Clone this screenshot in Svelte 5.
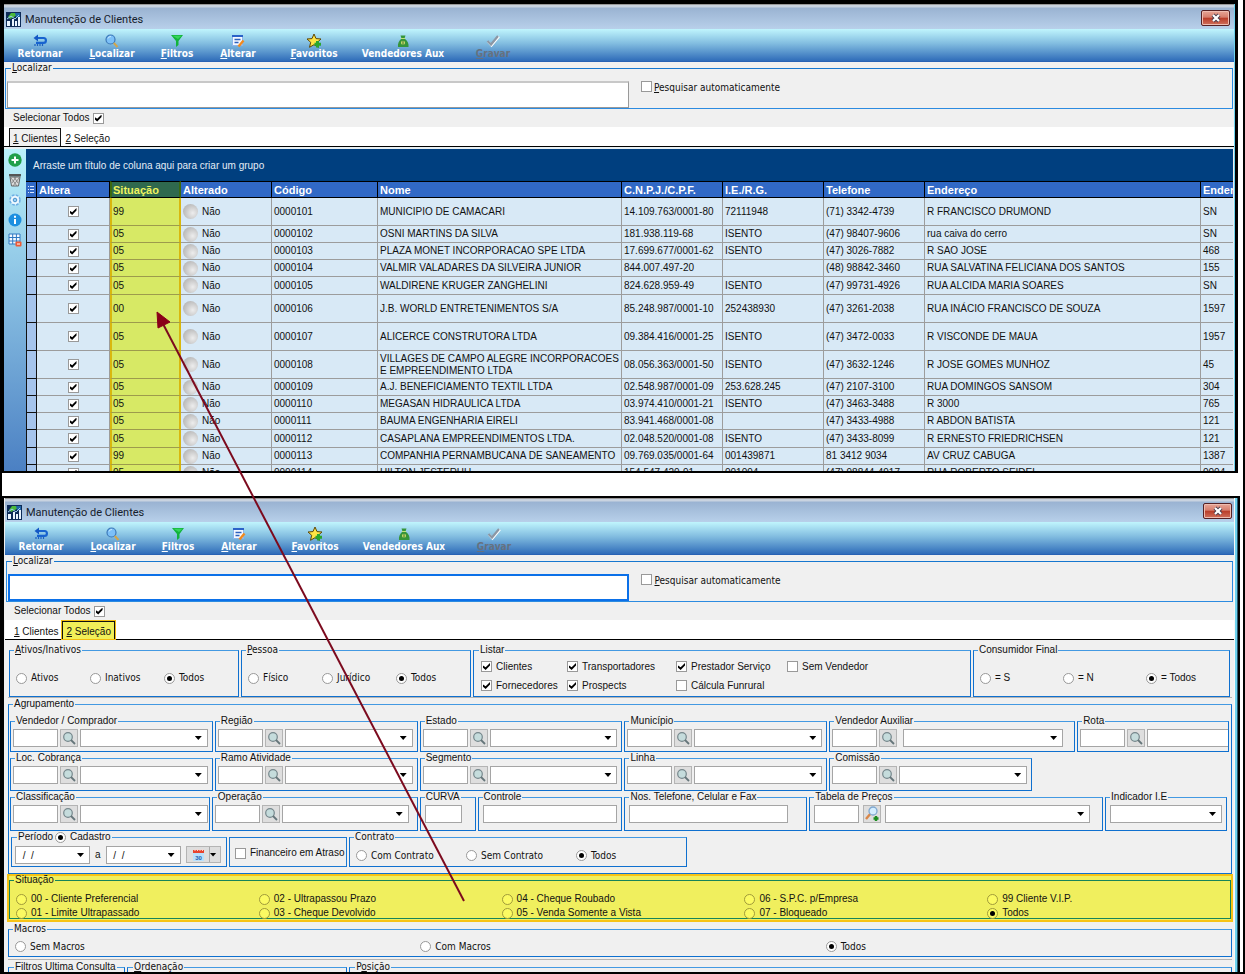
<script>
  const tools = [
    { icon: 'back', text: 'Retornar' },
    { icon: 'search', key: 'L', text: 'ocalizar' },
    { icon: 'filter', key: 'F', text: 'iltros' },
    { icon: 'edit', key: 'A', text: 'lterar' },
    { icon: 'star', key: 'F', text: 'avoritos' },
    { icon: 'bag', text: 'Vendedores Aux' },
    { icon: 'check', key: 'G', text: 'ravar', off: true }
  ];

  const heads = ['Altera', 'Situação', 'Alterado', 'Código', 'Nome', 'C.N.P.J./C.P.F.', 'I.E./R.G.', 'Telefone', 'Endereço', 'Ender'];

  const emptyDate = '\u00a0/\u00a0\u00a0/';

  // size, situação, código, nome, documento, inscrição, telefone, endereço, número
  const rows = [
    ['tall', '99', '0000101', 'MUNICIPIO DE CAMACARI', '14.109.763/0001-80', '72111948', '(71) 3342-4739', 'R FRANCISCO DRUMOND', 'SN'],
    ['low', '05', '0000102', 'OSNI MARTINS DA SILVA', '181.938.119-68', 'ISENTO', '(47) 98407-9606', 'rua caiva do cerro', 'SN'],
    ['low', '05', '0000103', 'PLAZA MONET INCORPORACAO SPE LTDA', '17.699.677/0001-62', 'ISENTO', '(47) 3026-7882', 'R SAO JOSE', '468'],
    ['low', '05', '0000104', 'VALMIR VALADARES DA SILVEIRA JUNIOR', '844.007.497-20', '', '(48) 98842-3460', 'RUA SALVATINA FELICIANA DOS SANTOS', '155'],
    ['mid', '05', '0000105', 'WALDIRENE KRUGER ZANGHELINI', '824.628.959-49', 'ISENTO', '(47) 99731-4926', 'RUA ALCIDA MARIA SOARES', 'SN'],
    ['tall', '00', '0000106', 'J.B. WORLD ENTRETENIMENTOS S/A', '85.248.987/0001-10', '252438930', '(47) 3261-2038', 'RUA INÁCIO FRANCISCO DE SOUZA', '1597'],
    ['tall', '05', '0000107', 'ALICERCE CONSTRUTORA LTDA', '09.384.416/0001-25', 'ISENTO', '(47) 3472-0033', 'R VISCONDE DE MAUA', '1957'],
    ['tall', '05', '0000108', 'VILLAGES DE CAMPO ALEGRE INCORPORACOES E EMPREENDIMENTO LTDA', '08.056.363/0001-50', 'ISENTO', '(47) 3632-1246', 'R JOSE GOMES MUNHOZ', '45'],
    ['low', '05', '0000109', 'A.J. BENEFICIAMENTO TEXTIL LTDA', '02.548.987/0001-09', '253.628.245', '(47) 2107-3100', 'RUA DOMINGOS SANSOM', '304'],
    ['low', '05', '0000110', 'MEGASAN HIDRAULICA LTDA', '03.974.410/0001-21', 'ISENTO', '(47) 3463-3488', 'R 3000', '765'],
    ['low', '05', '0000111', 'BAUMA ENGENHARIA EIRELI', '83.941.468/0001-08', '', '(47) 3433-4988', 'R ABDON BATISTA', '121'],
    ['mid', '05', '0000112', 'CASAPLANA EMPREENDIMENTOS LTDA.', '02.048.520/0001-08', 'ISENTO', '(47) 3433-8099', 'R ERNESTO FRIEDRICHSEN', '121'],
    ['low', '99', '0000113', 'COMPANHIA PERNAMBUCANA DE SANEAMENTO', '09.769.035/0001-64', '001439871', '81 3412 9034', 'AV CRUZ CABUGA', '1387'],
    ['low', '05', '0000114', 'HILTON JESTERHU', '154.547.420-91', '001094', '(47) 98844-4917', 'RUA ROBERTO SEIDEL', '0004']
  ];

  const situations = [
    '00 - Cliente Preferencial', '02 - Ultrapassou Prazo', '04 - Cheque Roubado', '06 - S.P.C. p/Empresa', '99 Cliente V.I.P.',
    '01 - Limite Ultrapassado', '03 - Cheque Devolvido', '05 - Venda Somente a Vista', '07 - Bloqueado', 'Todos'
  ];
</script>

{#snippet toolIcon(name)}
  <svg width="16" height="14" viewBox="0 0 16 14" aria-hidden="true">
    {#if name === 'back'}
      <path d="M4 4h7.500a2.300 2.300 0 0 1 0 4.800H4" fill="none" stroke="#1763cf" stroke-width="2.200" />
      <path d="M6 .5v7L1.500 4z" fill="#1458c4" />
      <path d="M3 10v2M5.500 10v2M8 10v2M10.500 10v2" stroke="#1d5fc0" stroke-width="1.200" />
    {:else if name === 'search'}
      <circle cx="6.500" cy="5.500" r="4.500" fill="#7cc0f8" stroke="#3c78b8" stroke-width="1.200" />
      <path d="M4 4.500a3 3 0 0 1 3-2" fill="none" stroke="#c8e8ff" />
      <path d="m9.800 9 3.700 4" stroke="#d3a54a" stroke-width="2" />
    {:else if name === 'filter'}
      <path d="M2 1h12L9.500 7v4L7 13V7z" fill="#12b43c" />
      <path d="M3.500 1.700h9L9 5z" fill="#35d55c" />
    {:else if name === 'edit'}
      <path d="M2.500 1.500h10v10h-10z" fill="#f4f8ff" stroke="#8db4ec" />
      <path d="M2 2h11" stroke="#2b62c8" stroke-width="2" />
      <path d="M4.500 5.500h6M4.500 8.500h4" stroke="#2e61be" stroke-width="1.600" />
      <path d="m8.500 12.500 5-6" stroke="#f08a20" stroke-width="2.400" />
    {:else if name === 'star'}
      <path d="m8 0 2 4.600 5 .4-3.700 3.300 1.200 5L8 10.700l-4.500 2.600 1.200-5L1 5l5-.4z" fill="#ffe545" stroke="#5d4708" />
      <path d="M11.500 7v6.500M8.500 10.200H15" stroke="#2ba62e" stroke-width="3" />
    {:else if name === 'bag'}
      <path d="M5.500 1.500h5L9.500 4.500c3 2 4.500 5 4 8.500H3C2.500 9.500 4 6.500 6.500 4.500z" fill="#36953a" />
      <path d="M6 4.500h4" stroke="#bfe27a" />
      <circle cx="8" cy="8.800" r="2" fill="#d9e36c" />
      <path d="M8 6.800v4" stroke="#28702b" />
    {:else}
      <path d="m3 7.500 3.500 4 7.500-9" fill="none" stroke="#fff" stroke-width="2.200" />
      <path d="m2.500 7 3.500 3.500L13 2" fill="none" stroke="#8b97a5" stroke-width="2.200" />
    {/if}
  </svg>
{/snippet}

{#snippet chrome(active)}
  <header class="title">
    <svg width="15" height="15" viewBox="0 0 15 15" aria-hidden="true">
      <path d="M0 0h15v15H0z" fill="#0e2b57" />
      <path d="M5 1h4l2 2-3 2-4 2-2-2z" fill="#4bb83a" />
      <path d="M9 1h5v5l-4-1z" fill="#1e65a5" />
      <path d="M1 9h3v5H1zM6 7h2v7H6zM9 9h2v5H9zM12 5h2v9h-2z" fill="#eaf4ff" />
      <path d="m1 7 4-3 4 3 4-4" fill="none" stroke="#99ccef" />
    </svg>
    <h1>Manutenção de Clientes</h1>
    <button class="close" aria-label="Fechar">
      <svg width="12" height="10" viewBox="0 0 12 10"><path d="m3 2 6 6M9 2 3 8" stroke="#4a3c4c" stroke-width="4" /><path d="m3 2 6 6M9 2 3 8" stroke="#fff" stroke-width="2.200" /></svg>
    </button>
  </header>
  <nav class="toolbar">
    {#each tools as t}
      <button class:off={t.off}>
        {@render toolIcon(t.icon)}
        <span>{#if t.key}<u>{t.key}</u>{/if}{t.text}</span>
      </button>
    {/each}
  </nav>
  <fieldset class="find">
    <legend class="tah"><u>L</u>ocalizar</legend>
    <input type="text" class:focus={active === 2} aria-label="Localizar" />
    <label class="tah"><input type="checkbox" /><span><u>P</u>esquisar automaticamente</span></label>
  </fieldset>
  <label class="all">Selecionar Todos<input type="checkbox" checked /></label>
  <div class="tabs" role="tablist">
    <button role="tab" aria-selected={active === 1} class:on={active === 1}><u>1</u> Clientes</button>
    <button role="tab" aria-selected={active === 2} class:on={active === 2} class:mark={active === 2}><u>2</u> Seleção</button>
  </div>
{/snippet}

{#snippet radio(group, text, on = false)}
  <label class="opt"><input type="radio" name={group} checked={on} />{text}</label>
{/snippet}

{#snippet tick(text, on = false)}
  <label class="opt"><input type="checkbox" checked={on} />{text}</label>
{/snippet}

{#snippet combo(name, value = '')}
  <span class="combo"><select aria-label={name}><option>{value}</option></select></span>
{/snippet}

{#snippet lookup(name, cls = '')}
  <fieldset class="box lookup {cls}">
    <legend>{name}</legend>
    <input type="text" aria-label="{name} código" />
    <button type="button" class="lens" aria-label="Buscar {name}">
      {#if cls === 'price'}
        <svg width="16" height="16" viewBox="0 0 16 16"><path d="m2 13 5-6" stroke="#d98648" stroke-width="2.400" /><circle cx="9" cy="5" r="4" fill="#d4edff" stroke="#7fa8d0" stroke-width="1.300" /><path d="M12 10v5M9.500 12.500h5" stroke="#1c8d22" stroke-width="2.400" /></svg>
      {:else}
        <svg width="14" height="14" viewBox="0 0 14 14"><circle cx="6" cy="6" r="4.300" fill="#c5dcdc" stroke="#76878c" stroke-width="1.200" /><path d="m9 9 4 4" stroke="#65767a" stroke-width="1.800" /></svg>
      {/if}
    </button>
    {#if cls === 'cut'}
      <input class="rest" type="text" aria-label={name} />
    {:else}
      {@render combo(name)}
    {/if}
  </fieldset>
{/snippet}

<main class="page">
  <section class="win first">
    {@render chrome(1)}
    <div class="work">
      <aside>
        <button aria-label="Incluir"><svg width="14" height="14" viewBox="0 0 14 14"><circle cx="7" cy="7" r="6.700" fill="#1f9f4a" /><path d="M7 3.500v7M3.500 7h7" stroke="#fff" stroke-width="2" /></svg></button>
        <button aria-label="Excluir"><svg width="14" height="14" viewBox="0 0 14 14"><path d="M1 1h12v2.500H1z" fill="#555" /><path d="M2 4h10l-1.500 9h-7z" fill="#ddd" stroke="#666" /><path d="m3 5 6 8M6 4l4 6M11 5l-6 8M8 4l-4 6" stroke="#777" stroke-width=".8" /></svg></button>
        <button aria-label="Configurar"><svg width="14" height="14" viewBox="0 0 14 14"><circle cx="7" cy="7" r="4.800" fill="#eef8ff" stroke="#6fb0e4" stroke-width="2" stroke-dasharray="2.500 1.300" /><circle cx="7" cy="7" r="4" fill="#eef8ff" /><circle cx="7" cy="7" r="1.800" fill="#9bd0f2" stroke="#4a92cc" /></svg></button>
        <button aria-label="Informações"><svg width="14" height="14" viewBox="0 0 14 14"><circle cx="7" cy="7" r="6.500" fill="#1b8fe0" /><path d="M7 2.700v2M7 6v5" stroke="#fff" stroke-width="2" /></svg></button>
        <button aria-label="Colunas"><svg width="14" height="14" viewBox="0 0 14 14"><path d="M1 1h11v10H1z" fill="#f4faff" stroke="#2e78c2" /><path d="M1 4.500h11M1 8h11M4.700 1v10M8.400 1v10" stroke="#2e78c2" /><rect x="7.500" y="8.500" width="6" height="5" rx="1" fill="#ee5a35" /><path d="M9 11h3" stroke="#fff" /></svg></button>
      </aside>
      <div class="grid">
        <p class="group">Arraste um título de coluna aqui para criar um grupo</p>
        <table>
          <colgroup>
            <col class="c0" /><col class="c1" /><col class="c2" /><col class="c3" /><col class="c4" /><col class="c5" /><col class="c6" /><col class="c6" /><col class="c6" /><col class="c7" /><col />
          </colgroup>
          <thead>
            <tr>
              <th class="ind"><svg width="7" height="10" viewBox="0 0 7 10" aria-hidden="true"><path d="M0 1.500h1M0 4.500h1M0 7.500h1M2 1.500h4M2 4.500h4M2 7.500h4" stroke="#dce8ff" /></svg></th>
              {#each heads as h, i}<th class:hot={i === 1}>{h}</th>{/each}
            </tr>
          </thead>
          <tbody>
            {#each rows as r}
              <tr class={r[0]}>
                <td class="ind"></td>
                <td class="pick"><input type="checkbox" checked aria-label="Altera {r[2]}" /></td>
                <td class="hot">{r[1]}</td>
                <td><span class="state"><i></i>Não</span></td>
                <td>{r[2]}</td>
                <td class="name">{r[3]}</td>
                <td>{r[4]}</td>
                <td>{r[5]}</td>
                <td>{r[6]}</td>
                <td>{r[7]}</td>
                <td>{r[8]}</td>
              </tr>
            {/each}
          </tbody>
        </table>
      </div>
    </div>
  </section>

  <section class="win second">
    {@render chrome(2)}
    <form>
      <div class="top">
        <fieldset class="box tah three"><legend><u>A</u>tivos/Inativos</legend>{@render radio('at', 'Ativos')}{@render radio('at', 'Inativos')}{@render radio('at', 'Todos', true)}</fieldset>
        <fieldset class="box tah three"><legend><u>P</u>essoa</legend>{@render radio('pe', 'Físico')}{@render radio('pe', 'Jurídico')}{@render radio('pe', 'Todos', true)}</fieldset>
        <fieldset class="box list"><legend>Listar</legend>{@render tick('Clientes', true)}{@render tick('Transportadores', true)}{@render tick('Prestador Serviço', true)}{@render tick('Sem Vendedor')}{@render tick('Fornecedores', true)}{@render tick('Prospects', true)}{@render tick('Cálcula Funrural')}</fieldset>
        <fieldset class="box three"><legend>Consumidor Final</legend>{@render radio('cf', '= S')}{@render radio('cf', '= N')}{@render radio('cf', '= Todos', true)}</fieldset>
      </div>

      <fieldset class="box agrup">
        <legend>Agrupamento</legend>
        <div class="line l1">
          {@render lookup('Vendedor / Comprador')}
          {@render lookup('Região')}
          {@render lookup('Estado')}
          {@render lookup('Município')}
          {@render lookup('Vendedor Auxiliar', 'aux')}
          {@render lookup('Rota', 'cut')}
        </div>
        <div class="line l2">
          {@render lookup('Loc. Cobrança')}
          {@render lookup('Ramo Atividade')}
          {@render lookup('Segmento')}
          {@render lookup('Linha')}
          {@render lookup('Comissão')}
        </div>
        <div class="line l3">
          {@render lookup('Classificação', 'tight')}
          {@render lookup('Operação', 'oper')}
          <fieldset class="box lookup one curva"><legend>CURVA</legend><input type="text" aria-label="CURVA" /></fieldset>
          <fieldset class="box lookup one"><legend>Controle</legend><input type="text" aria-label="Controle" /></fieldset>
          <fieldset class="box lookup one fone"><legend>Nos. Telefone, Celular e Fax</legend><input type="text" aria-label="Nos. Telefone, Celular e Fax" /></fieldset>
          {@render lookup('Tabela de Preços', 'price')}
          <fieldset class="box lookup one ie"><legend>Indicador I.E</legend>{@render combo('Indicador I.E')}</fieldset>
        </div>
        <div class="line l4">
          <fieldset class="box lookup period">
            <legend>Período<label class="opt"><input type="radio" name="per" checked />Cadastro</label></legend>
            {@render combo('Data inicial', emptyDate)}<span>a</span>{@render combo('Data final', emptyDate)}
            <button type="button" class="cal" aria-label="Calendário">
              <svg width="14" height="14" viewBox="0 0 14 14"><path d="M1 2h11v11H1z" fill="#b9e0fb" /><path d="M1 2h11v3H1z" fill="#e8432c" /><path d="M3 1v2M5.500 1v2M8 1v2M10.500 1v2" stroke="#f9d6cf" /><text x="6.500" y="11.500" text-anchor="middle" font-size="6" font-weight="bold" fill="#1b5fae">30</text></svg>
              <b></b>
            </button>
          </fieldset>
          <div class="box plain">{@render tick('Financeiro em Atraso')}</div>
          <fieldset class="box tah contract"><legend>Contrato</legend>{@render radio('co', 'Com Contrato')}{@render radio('co', 'Sem Contrato')}{@render radio('co', 'Todos', true)}</fieldset>
        </div>
      </fieldset>

      <div class="marked">
        <fieldset class="box sit"><legend>Situação</legend>{#each situations as s}{@render radio('si', s, s === 'Todos')}{/each}</fieldset>
      </div>

      <fieldset class="box tah three macros"><legend>Macros</legend>{@render radio('ma', 'Sem Macros')}{@render radio('ma', 'Com Macros')}{@render radio('ma', 'Todos', true)}</fieldset>

      <div class="last">
        <fieldset class="box"><legend>Filtros Ultima Consulta</legend></fieldset>
        <fieldset class="box tah"><legend><u>O</u>rdenação</legend></fieldset>
        <fieldset class="box tah"><legend>P<u>o</u>sição</legend></fieldset>
      </div>
    </form>
  </section>

  <svg class="arrow" width="320" height="600" viewBox="0 0 320 600" aria-hidden="true">
    <path d="M9 12 312 593" stroke="#7c0a1e" stroke-width="2" />
    <path d="M5 4 6 20 18 14z" fill="#8a0018" stroke="#8a0018" />
  </svg>
</main>

<style>
  :global(body) { margin: 0; background: #fff; }
  .page {
    position: relative;
    box-sizing: border-box;
    display: flex;
    flex-direction: column;
    gap: 23px;
    height: 100vh;
    border: solid #000;
    border-width: 0 2px 2px;
    font: 10px/12px "Liberation Sans", Arial, sans-serif;
    color: #111;
    overflow: hidden;
  }
  .page :global(*) { box-sizing: border-box; }
  .tah, .tah :global(*) { font-family: "DejaVu Sans Condensed", "DejaVu Sans", sans-serif; }
  button, input, select { font: inherit; color: inherit; margin: 0; border-radius: 0; }
  button { padding: 0; border: 0; background: none; }

  .win { display: flex; flex-direction: column; min-height: 0; overflow: hidden; border: solid #000; }
  .first { flex: 1 1 473px; margin-right: 5px; padding-right: 1px; border-width: 4px 3px 2px 2px; background: linear-gradient(to left, #6fd3ee 1px, #f0f0f0 1px); }
  .second { flex: 1 1 476px; margin-right: 3px; padding: 0 4px 0 1px; border-width: 2px 2px 0; background: linear-gradient(to left, #2a5870 1px, #6fd3ee 1px, #6fd3ee 3px, #fff 3px, #f0f0f0 4px); }
  .win > :global(*) { flex-shrink: 0; }

  .title { display: flex; align-items: center; gap: 4px; height: 25px; padding: 4px 4px 0 2px; border-top: 1px solid #999; background: linear-gradient(#c9d3e0 2px, #9ab3d2 3px, #b8d0ea); }
  .second .title { height: 24px; padding: 3px 2px 0 2px; }
  h1 { flex: 1; margin: 0; font: 11px/15px Roboto, "Open Sans", sans-serif; color: #16202c; }
  .close { display: grid; place-items: center; width: 29px; height: 16px; margin-bottom: 3px; border: 1px solid #552124; border-radius: 2px; background: linear-gradient(#e7a697, #d67d6c 45%, #b93c28 50%, #d0705c); box-shadow: inset 0 0 0 1px #eebcb0; }

  .toolbar { display: grid; grid-template-columns: 72px 72px 58px 64px 88px 90px 90px; height: 33px; border-bottom: 1px solid #2862b4; background: linear-gradient(#c0f5fd, #82bde0 45%, #2f6cb9); }
  .toolbar button { display: flex; flex-direction: column; align-items: center; padding-top: 5px; font: bold 10px/12px "DejaVu Sans Condensed", "DejaVu Sans", sans-serif; color: #fff; white-space: nowrap; }
  .toolbar .off { color: #66717f; }

  fieldset { min-width: 0; margin: 0; padding: 0; border: 1px solid #0f6fcc; }
  legend { height: 12px; margin-left: 4px; padding: 0 1px; line-height: 12px; white-space: nowrap; }
  .box { border-color: #4399e2 #0f70cf #0f70cf; }

  .find { display: grid; grid-template-columns: 622fr 591fr; column-gap: 12px; margin: 0 1px; height: 47px; padding: 7px 0 0 1px; align-items: start; border-color: #1677cf #2c8be0 #2c8be0; }
  .find > input { width: 100%; height: 27px; border: 1px solid #999; border-top: 2px solid #c8c8c8; background: #fff; }
  .find > input.focus { border: 2px solid #0b70e8; outline: 0; }
  .find label { display: flex; gap: 2px; line-height: 13px; }
  .all { display: flex; align-items: center; gap: 3px; height: 18px; padding-left: 9px; }

  input[type='checkbox'], input[type='radio'] { appearance: none; flex: none; display: grid; place-items: center; width: 11px; height: 11px; border: 1px solid #999; background: #fff; }
  input[type='checkbox']:checked::after { content: ''; width: 7px; height: 7px; background: #000; clip-path: polygon(0 35%, 38% 62%, 100% 0, 100% 35%, 38% 100%, 0 68%); }
  input[type='radio'] { border-radius: 50%; }
  input[type='radio']:checked::after { content: ''; width: 5px; height: 5px; border-radius: 50%; background: #000; }

  .tabs { display: flex; align-items: flex-end; height: 20px; padding-left: 5px; background: #fff; border-bottom: 1px solid #000; }
  .tabs button { height: 18px; padding: 2px 3px 0; border: 1px solid transparent; border-bottom: 0; }
  .tabs .on { border-color: #111; background: #f0f0f0; }
  .tabs .mark { background: #f2ef59; box-shadow: 0 0 0 1px #f3bd10; }

  .work { flex: 1 1 0; display: flex; min-height: 0; overflow: hidden; border-top: 2px solid #e8eff2; }
  aside { flex: none; display: flex; flex-direction: column; align-items: center; gap: 6px; width: 22px; padding-top: 4px; background: linear-gradient(#baf2fb, #4b80c3); }
  aside button { height: 14px; }
  aside svg { display: block; }
  .grid { flex: 1; min-width: 0; margin-right: 1px; overflow: hidden; }
  .group { margin: 0; height: 32px; padding: 11px 7px 0; background: #003f7f; color: #e4edf6; }

  table { width: 100%; table-layout: fixed; border-collapse: separate; border-spacing: 0; background: #d8e9f6; }
  .c0 { width: 11px; } .c1 { width: 73px; } .c2 { width: 71px; } .c3 { width: 91px; } .c4 { width: 106px; }
  .c5 { width: 244px; } .c6 { width: 101px; } .c7 { width: 276px; }
  th { height: 17px; padding: 0 0 0 2px; border: solid #000; border-width: 1px 1px 1px 0; background: #3169c6; color: #fff; font-size: 11px; line-height: 14px; text-align: left; white-space: nowrap; overflow: hidden; }
  th:last-child, td:last-child { border-right: 0; }
  td { padding: 0 2px; border: solid #9c9c9c; border-width: 0 1px 1px 0; background: #d8e9f6; white-space: nowrap; line-height: 12px; overflow: hidden; }
  td.name { padding-right: 0; white-space: normal; }
  .tall td { height: 28px; } .mid td { height: 18px; } .low td { height: 17px; }
  th.ind { padding: 0 0 0 2px; line-height: 8px; }
  td.ind { background: #a5c4ec; border-color: #111; border-left: 1px solid #111; }
  .pick input { margin: 0 auto; }
  td.hot { padding-left: 1px; background: #d7e965; border-left: 2px solid #d9b70e; border-right: 2px solid #d9b70e; border-bottom-color: #9d9b4c; }
  th.hot { padding-left: 1px; background: #2f694e; color: #eff45f; border-left: 2px solid #3c6a10; border-right: 2px solid #3c6a10; }
  .state { display: flex; align-items: center; gap: 4px; height: 15px; }
  .state i { width: 15px; height: 15px; border-radius: 50%; background: radial-gradient(circle at 65% 60%, #ededed, #c6c6c6 55%, #a9a9a9); }

  form { flex: 1 1 0; min-height: 0; overflow: hidden; margin-top: 4px; padding: 0 2px 0 3px; background: #f0f0f0; }
  .opt { display: flex; align-items: center; gap: 4px; white-space: nowrap; }
  .top { display: grid; grid-template-columns: 230fr 230fr 498fr 257fr; gap: 2px; padding: 0 2px 0 1px; height: 54px; border-bottom: 1px solid #b4b4b4; }
  .three { display: grid; grid-template-columns: repeat(3, 1fr); align-items: center; padding: 4px 0 0 6px; }
  .list { display: grid; grid-template-columns: 86px 109px 111px 1fr; align-content: center; row-gap: 7px; padding-left: 7px; }
  .three legend, .list legend, .sit legend, .contract legend { margin-left: -2px; }
  .agrup { height: 176px; padding: 5px 0 0; }
  .line { display: grid; column-gap: 2px; padding-left: 1px; }
  .l1 { grid-template-columns: 203fr 203fr 203fr 203fr 246fr 152fr; height: 37px; padding-right: 2px; }
  .l2 { grid-template-columns: 203fr 203fr 203fr 203fr 203fr 195fr; height: 39px; padding-right: 2px; }
  .l3 { grid-template-columns: 200fr 206fr 56fr 145fr 183fr 294fr 122fr; height: 40px; padding-right: 4px; }
  .l4 { grid-template-columns: 216px 118px 338px; height: 36px; padding-left: 2px; }
  .lookup { display: flex; align-items: flex-start; gap: 2px; padding: 2px 4px 0 2px; }
  .lookup legend { margin-left: 2px; }
  .lookup > input { flex: none; width: 45px; height: 18px; border: 1px solid #a5a5a5; background: #fff; }
  .lens { flex: none; display: grid; place-items: center; width: 18px; height: 18px; border: 1px solid #b4b4b4; background: #dedede; }
  .combo { flex: 1; display: grid; align-items: center; min-width: 0; height: 18px; }
  .combo select { grid-area: 1 / 1; appearance: none; width: 100%; height: 18px; padding: 0 4px; border: 1px solid #a5a5a5; background: #fff; }
  .combo::after { content: ''; grid-area: 1 / 1; justify-self: end; width: 7px; height: 4px; margin-right: 6px; background: #000; clip-path: polygon(0 0, 100% 0, 50% 100%); pointer-events: none; }
  .aux { padding-right: 11px; }
  .aux .combo { margin-left: 4px; }
  .cut { padding-right: 0; }
  .cut > input.rest { flex: 1; min-width: 0; border-right: 0; }
  .tight { padding-right: 1px; }
  .oper { padding-right: 8px; }
  .lookup.one { padding-left: 4px; }
  .one legend, .price legend { margin-left: 0; }
  .one > input { flex: 1; width: auto; min-width: 0; }
  .curva { padding-right: 13px; }
  .fone { padding-right: 18px; }
  .price { padding: 2px 12px 0 4px; gap: 4px; }
  .period { padding: 3px 5px 0 3px; gap: 3px; }
  .period .combo { flex: 0 0 75px; }
  .period > span { line-height: 18px; }
  .period > span:nth-of-type(2) { padding: 0 2px; }
  .period legend { display: flex; gap: 2px; }
  .cal { flex: none; display: flex; align-items: center; justify-content: space-between; width: 35px; height: 17px; margin-left: 2px; padding: 0 3px 0 5px; border: 1px solid #b4b4b4; background: linear-gradient(to right, #dedede 22px, #aaa 22px, #aaa 23px, #dedede 23px); }
  .cal b { width: 7px; height: 4px; background: #000; clip-path: polygon(0 0, 100% 0, 50% 100%); }
  .plain { margin-top: 6px; padding: 9px 0 0 5px; border: 1px solid #1a78d2; }
  .contract { display: grid; grid-template-columns: 110px 110px 1fr; align-items: center; padding: 2px 0 0 6px; }

  .marked { margin: 0 -1px; height: 48px; border: 2px solid #f7c315; background: #f0ef5e; }
  .sit { display: grid; grid-template-columns: repeat(5, 243fr); align-content: start; row-gap: 2px; height: 45px; margin-top: -2px; padding: 7px 0 0 6px; border-color: #16845a; }
  .sit input { background: #fbfa62; border-color: #a09a3a; }
  .sit .opt { height: 12px; }
  .macros { height: 34px; margin-top: 1px; padding-top: 2px; }
  .last { display: grid; grid-template-columns: 117fr 220fr 882fr; gap: 2px; margin-top: 2px; border-top: 1px solid #b4b4b4; padding-top: 1px; }
  .last legend { margin-left: 5px; }
  .last fieldset { height: 40px; }

  .arrow { position: absolute; left: 150px; top: 308px; pointer-events: none; }
</style>
